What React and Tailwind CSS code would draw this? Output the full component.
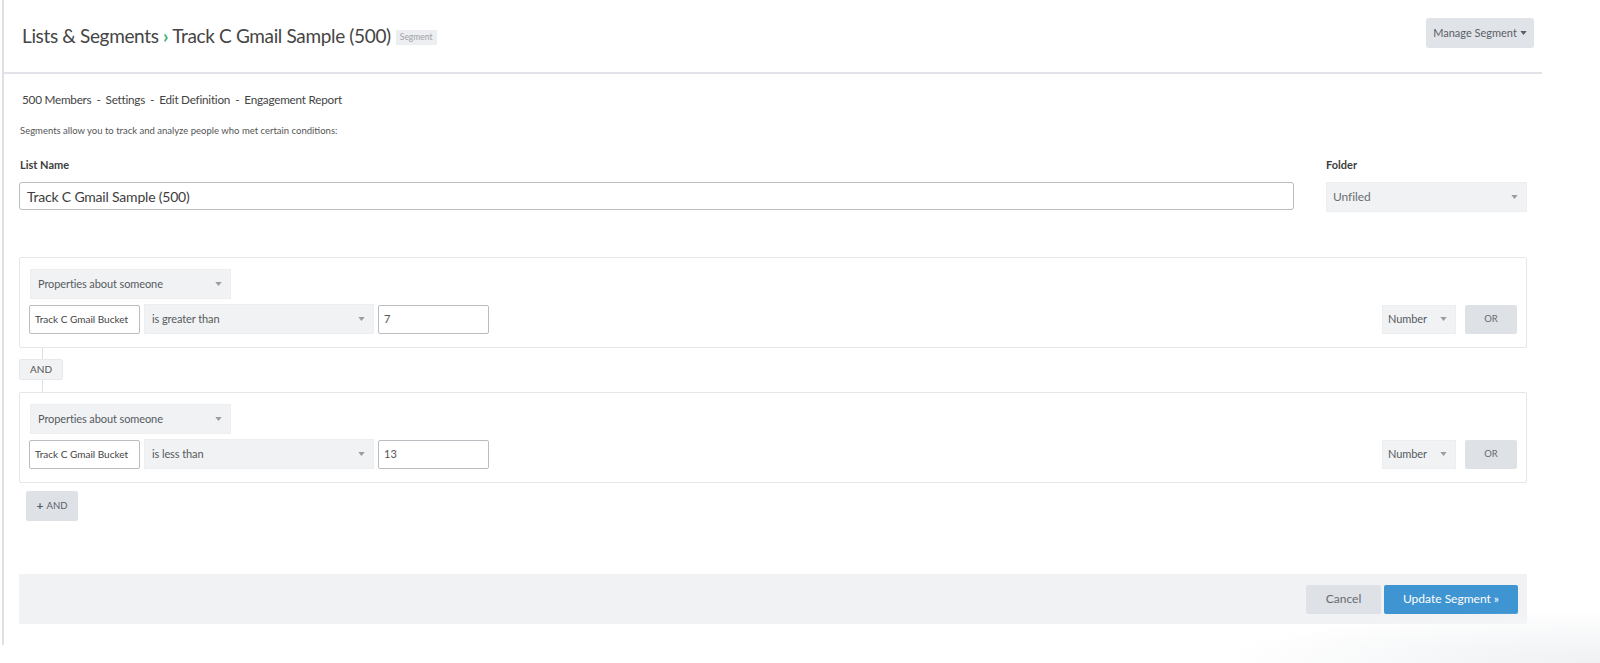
const Caret = ({ className = '' }) => (
    <svg viewBox="0 0 8 5" className={`w-[7px] h-[4px] ${className}`} fill="currentColor">
        <path d="M0 0h8L4 5z" />
    </svg>
)

function Select({ label, className = '', textClass = 'text-[11px]' }) {
    return (
        <div className={`flex items-center justify-between bg-[#f1f2f4] border border-[#eceef0] pl-[7px] pr-[8px] text-[#555a60] tracking-[-0.1px] ${textClass} ${className}`}>
            <span>{label}</span>
            <Caret className="text-[#9a9ea3]" />
        </div>
    )
}

function Condition({ op, value }) {
    return (
        <div className="border border-[#e4e6e9] rounded-[2px] pl-[9px] pr-[9px] pt-[11px] pb-[13px]">
            <Select label="Properties about someone" className="w-[201px] h-[30px] ml-px" />
            <div className="flex items-center justify-between mt-[5px]">
                <div className="flex items-center gap-[4px]">
                    <div className="w-[111px] h-[29px] border border-[#b9bcc0] rounded-[2px] bg-white flex items-center px-[5px] text-[10px] text-[#444]">
                        Track C Gmail Bucket
                    </div>
                    <Select label={op} className="w-[230px] h-[30px]" />
                    <div className="w-[111px] h-[29px] border border-[#b9bcc0] rounded-[2px] bg-white flex items-center px-[5px] text-[11px] text-[#555]">
                        {value}
                    </div>
                </div>
                <div className="flex items-center gap-[9px]">
                    <Select label="Number" className="w-[74px] h-[29px] !pl-[5px]" />
                    <button className="w-[52px] h-[29px] bg-[#dee1e5] rounded-[2px] text-[9.5px] text-[#666b72]">OR</button>
                </div>
            </div>
        </div>
    )
}

const navItems = ['500 Members', 'Settings', 'Edit Definition', 'Engagement Report']

export default function App() {
    return (
        <div className="relative w-[1600px] h-[663px] bg-white font-['Lato',sans-serif] pl-[2px] overflow-hidden">
            <div className="w-[1540px] h-[645px] border-l-2 border-[#dde1e6] flex flex-col">
                {/* header */}
                <div className="h-[74px] border-b-2 border-[#e1e3e8] flex justify-between pl-[18px] pr-[8px]">
                    <div className="flex items-center h-[73px] gap-[5px]">
                        <h1 className="text-[19px] text-[#454545] tracking-[-0.35px]">
                            Lists &amp; Segments <span className="text-[#3bb273] font-bold">›</span> Track C Gmail Sample (500)
                        </h1>
                        <span className="bg-[#eceef1] text-[#9ca1a7] text-[8.5px] px-[4px] py-[2px] leading-[11px] mt-[1px]">Segment</span>
                    </div>
                    <button className="mt-[18px] w-[108px] h-[30px] rounded-[3px] bg-[#e0e3e7] text-[#5b6067] text-[11px] flex items-center justify-center gap-[3px]">
                        Manage Segment <Caret className="text-[#5b6067] w-[6px] h-[4px]" />
                    </button>
                </div>

                <div className="px-[15px] flex-1 flex flex-col">
                    {/* sub nav */}
                    <div className="mt-[18px] pl-[3px] flex items-center text-[11.75px] tracking-[-0.25px] text-[#444] leading-[16px]">
                        {navItems.map((item, i) => (
                            <span key={item} className="flex items-center">
                                {i > 0 && <span className="mx-[5px]">-</span>}
                                {item}
                            </span>
                        ))}
                    </div>
                    <p className="mt-[17px] pl-px text-[9.5px] text-[#555] leading-[12px]">
                        Segments allow you to track and analyze people who met certain conditions:
                    </p>

                    {/* list name / folder */}
                    <div className="flex gap-[32px] mt-[21px]">
                        <div className="flex-1">
                            <div className="text-[11px] font-bold text-[#3d3d3d] leading-[14px] pl-px">List Name</div>
                            <div className="mt-[10px] h-[28px] border border-[#b9bcc0] rounded-[3px] flex items-center px-[7px] text-[14px] text-[#3d3d3d] tracking-[-0.2px]">
                                Track C Gmail Sample (500)
                            </div>
                        </div>
                        <div className="w-[201px]">
                            <div className="text-[11px] font-bold text-[#3d3d3d] leading-[14px]">Folder</div>
                            <Select label="Unfiled" className="mt-[10px] h-[30px] !pl-[6px]" textClass="text-[12px] !text-[#6a6e73]" />
                        </div>
                    </div>

                    {/* conditions */}
                    <div className="mt-[45px]">
                        <Condition op="is greater than" value="7" />
                        <div className="flex flex-col">
                            <div className="w-px h-[11px] bg-[#dcdfe3] ml-[23px]" />
                            <div className="w-[44px] h-[21px] bg-[#f1f2f4] border border-[#e6e8eb] rounded-[2px] flex items-center justify-center text-[10px] text-[#555]">
                                AND
                            </div>
                            <div className="w-px h-[12px] bg-[#dcdfe3] ml-[23px]" />
                        </div>
                        <Condition op="is less than" value="13" />
                        <button className="mt-[8px] ml-[7px] w-[52px] h-[30px] bg-[#dee1e5] rounded-[2px] text-[9.5px] text-[#5b6067] flex items-center justify-center gap-[3px]">
                            <span className="text-[12px] font-bold leading-none">+</span> AND
                        </button>
                    </div>

                    {/* footer */}
                    <div className="mt-[53px] h-[50px] bg-[#f1f2f4] flex items-center justify-end pr-[9px] gap-[3px]">
                        <button className="w-[75px] h-[29px] bg-[#dee1e5] rounded-[2px] text-[12px] text-[#666b72]">Cancel</button>
                        <button className="w-[134px] h-[29px] bg-[#3f94d2] rounded-[2px] text-[12px] text-white">Update Segment »</button>
                    </div>
                </div>
            </div>
            <div className="absolute right-0 bottom-0 w-[360px] h-[50px] bg-[radial-gradient(ellipse_at_bottom_right,#eff1f3_0%,#f7f8f9_40%,rgba(255,255,255,0)_75%)]" />
        </div>
    )
}
